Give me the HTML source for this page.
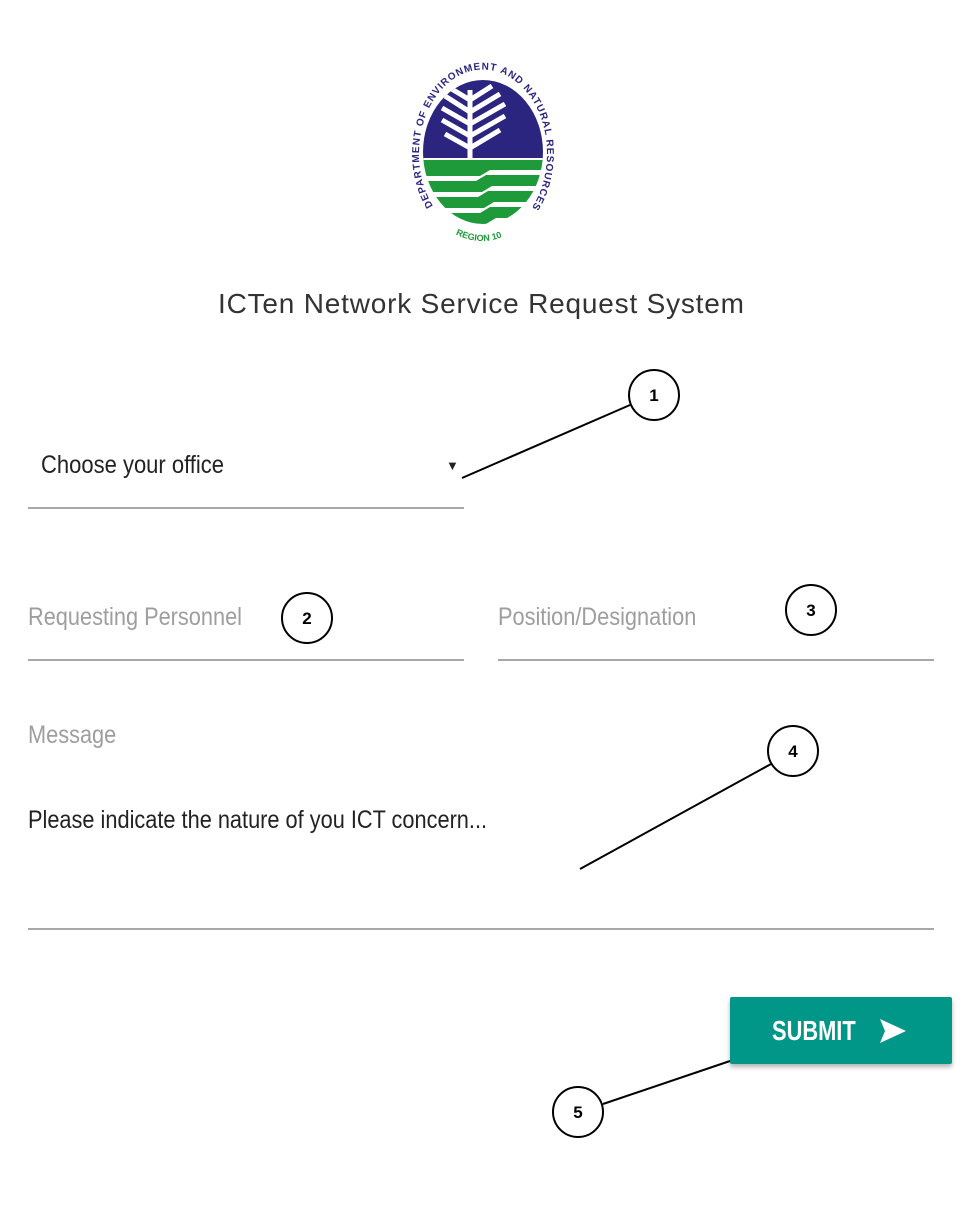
<!DOCTYPE html>
<html><head><meta charset="utf-8"><style>
body{margin:0;width:970px;height:1206px;background:#fff;position:relative;overflow:hidden;font-family:"Liberation Sans",sans-serif}
.a{position:absolute;white-space:nowrap;transform-origin:0 0}
.ln{position:absolute;height:2px;background:#a8a8a8}
</style></head><body>
<svg class="a" style="left:400px;top:50px" width="170" height="210" viewBox="400 50 170 210">
<defs><clipPath id="c"><ellipse cx="483" cy="152" rx="60" ry="72"/></clipPath>
<path id="arc" d="M433,206 A64,84 0 1 1 533,206"/>
<path id="arc2" d="M448,230 Q482,252 516,230"/></defs>
<g clip-path="url(#c)">
<rect x="420" y="75" width="130" height="85" fill="#2b2580"/>
<rect x="420" y="158" width="130" height="70" fill="#fff"/>
<g fill="#1e9a3a">
<polygon points="420,160 550,160 550,170 490,170 480,176 420,176"/>
<polygon points="420,181 476,181 486,175 550,175 550,186 492,186 482,192 420,192"/>
<polygon points="420,197 478,197 488,191 550,191 550,202 494,202 484,208 420,208"/>
<polygon points="420,213 480,213 490,207 550,207 550,218 496,218 486,224 420,224"/>
</g>
<g stroke="#fff" stroke-width="5" fill="none">
<path d="M470,160 L470,90"/><path d="M470,100 L450,88 M470,112 L445,96 M470,124 L442,108 M470,136 L442,120 M470,148 L445,134"/>
<path d="M470,100 L492,86 M470,112 L500,94 M470,124 L505,104 M470,136 L505,116 M470,148 L500,130"/>
</g>
</g>
<text font-size="10" font-weight="bold" fill="#2b2580" font-family="Liberation Sans"><textPath href="#arc" startOffset="0" textLength="345" lengthAdjust="spacing">DEPARTMENT OF ENVIRONMENT AND NATURAL RESOURCES</textPath></text>
<text font-size="9" font-weight="bold" fill="#1e9a3a" font-family="Liberation Sans"><textPath href="#arc2" startOffset="12%">REGION 10</textPath></text>
</svg>
<div class="a" style="left:218px;top:288px;font-size:28px;letter-spacing:0.8px;color:#333">ICTen Network Service Request System</div>
<div class="a" style="left:41px;top:451px;font-size:25px;color:#222;transform:scaleX(.88)">Choose your office</div>
<div class="a" style="left:446px;top:458px;font-size:13px;color:#222">▼</div>
<div class="ln" style="left:28px;top:507px;width:436px"></div>
<div class="a" style="left:28px;top:603px;font-size:25px;color:#9e9e9e;transform:scaleX(.87)">Requesting Personnel</div>
<div class="a" style="left:498px;top:603px;font-size:25px;color:#9e9e9e;transform:scaleX(.87)">Position/Designation</div>
<div class="ln" style="left:28px;top:659px;width:436px"></div>
<div class="ln" style="left:498px;top:659px;width:436px"></div>
<div class="a" style="left:28px;top:721px;font-size:25px;color:#9e9e9e;transform:scaleX(.87)">Message</div>
<div class="a" style="left:28px;top:806px;font-size:25px;color:#222;transform:scaleX(.87)">Please indicate the nature of you ICT concern...</div>
<div class="ln" style="left:28px;top:928px;width:906px"></div>
<div class="a" style="left:730px;top:997px;width:222px;height:67px;background:#009688;border-radius:2px;box-shadow:0 3px 5px rgba(0,0,0,.3)"></div>
<div class="a" style="left:772px;top:1015px;font-size:28px;font-weight:bold;color:#fff;transform:scaleX(.78)">SUBMIT</div>
<svg class="a" style="left:878px;top:1017px" width="30" height="28"><polygon points="2,2 28,14 2,26 7,14" fill="#fff"/></svg>
<svg class="a" style="left:0;top:0" width="970" height="1206" fill="none" stroke="#000" stroke-width="2">
<line x1="630" y1="405" x2="462" y2="478"/>
<line x1="771" y1="764" x2="580" y2="869"/>
<line x1="603" y1="1104" x2="730" y2="1061"/>
<g fill="#fff">
<circle cx="654" cy="395" r="25"/><circle cx="307" cy="618" r="25"/><circle cx="811" cy="610" r="25"/><circle cx="793" cy="751" r="25"/><circle cx="578" cy="1112" r="25"/>
</g>
<g fill="#000" stroke="none" font-family="Liberation Sans" font-weight="bold" font-size="17" text-anchor="middle">
<text x="654" y="401">1</text><text x="307" y="624">2</text><text x="811" y="616">3</text><text x="793" y="757">4</text><text x="578" y="1118">5</text>
</g>
</svg>
</body></html>
